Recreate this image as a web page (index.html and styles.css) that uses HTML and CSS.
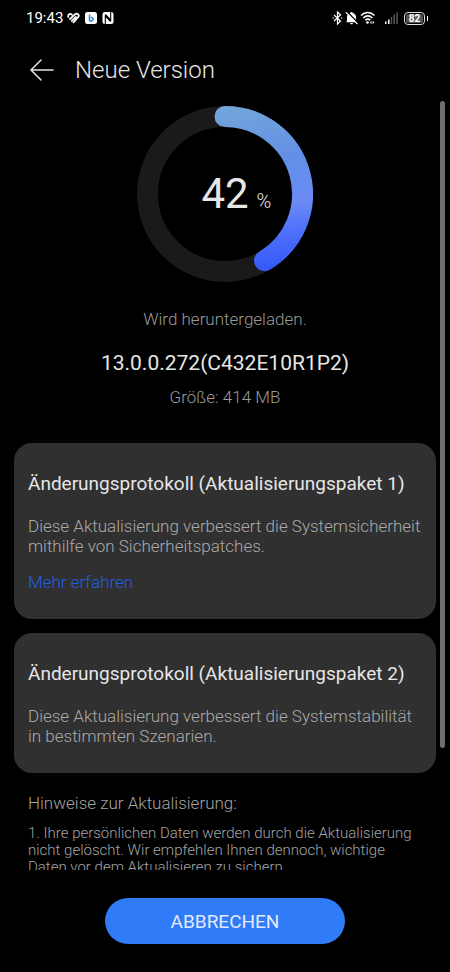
FILE: index.html
```html
<!DOCTYPE html>
<html lang="de">
<head>
<meta charset="utf-8">
<meta name="viewport" content="width=device-width, initial-scale=1">
<title>Neue Version</title>
<link rel="stylesheet" href="styles.css">
</head>
<body>
<div class="status">
  <div class="status-group">
    <span class="clock">19:43</span>
    <svg width="13" height="12" viewBox="0 0 13 12" fill="none" stroke="#fff" stroke-width="1.800" stroke-linecap="round" stroke-linejoin="round"><path d="M1.200 4.800C.8 2.500 3 1.200 4.800 2.600M3 7 8.200 2.200C10 .8 12.200 2.200 11.700 4.300L6.500 10.300M4.800 8.800 8.800 5"/></svg>
    <svg class="badge-icon" width="12" height="12" viewBox="0 0 12 12"><rect width="12" height="12" rx="2.500" fill="#fff"/><path d="M4.500 2.500v6l1.500.8 2-1.300c.8-1.500-.3-2.500-2.300-2.500" fill="none" stroke="#2f86dc" stroke-width="1.500"/></svg>
    <svg width="12" height="12" viewBox="0 0 12 12"><rect x=".5" width="11" height="12" rx="2.500" fill="#fff"/><path d="M3.300 12V4L8.700 9.500M8.700 0V8L3.300 2.500" fill="none" stroke="#000" stroke-width="1.100"/></svg>
  </div>
  <div class="status-group status-right">
    <svg width="11" height="14" viewBox="0 0 11 14" fill="none" stroke="#fff" stroke-width="1.200"><path d="m2 4 6.500 6L5.500 13V1l3 3L2 10"/><path d="M.5 7h1.500M9 7h1.500"/></svg>
    <svg width="13" height="14" viewBox="0 0 13 14"><path d="M2 10V6a4.500 4.500 0 0 1 3.300-4c0-1.500 2.400-1.500 2.400 0A4.500 4.500 0 0 1 11 6v4l1 1.200H1zM5 12h3c-.3 1.700-2.700 1.700-3 0z" fill="#fff"/><path d="m2 .5 11 11.500" stroke="#000" stroke-width="1.300"/><path d="m.8 1.200 11.700 12" stroke="#fff" stroke-width="1.200"/></svg>
    <svg width="16" height="14" viewBox="0 0 16 14" fill="none" stroke="#fff" stroke-width="1.600"><path d="M1 4.500c4-4 9.500-4 13.500 0M3.200 7c3-2.700 6.300-2.700 9.200 0M5.300 9.200c1.700-1.300 3.500-1.300 5 0"/><circle cx="7.500" cy="11.500" r="1.300" fill="#fff" stroke="none"/><path d="m11.500 9.700-1.600 1.800 1.600 1.800zM12.700 9.700l1.600 1.800-1.600 1.800z" fill="#fff" stroke="none"/></svg>
    <svg class="signal" width="13" height="12" viewBox="0 0 13 12"><path d="M0 9.500h1.500V12H0zM3 7.500h1.500V12H3z" fill="#fff"/><path d="M5.700 5h1.500v7H5.700zM8.500 2.500H10V12H8.500zM11.300.5h1.500V12h-1.500z" fill="#555"/></svg>
    <div class="battery"><span>82</span></div>
  </div>
</div>
<header class="header">
  <button class="back" type="button" aria-label="Zurück"><svg width="24" height="22" viewBox="0 0 24 22" fill="none" stroke="#e4e4e4" stroke-width="1.500" stroke-linecap="round" stroke-linejoin="round"><path d="M11 1 1 11l10 10M1 11h22"/></svg></button>
  <h1>Neue Version</h1>
</header>
<main class="content">
  <section class="progress">
    <div class="ring">
      <svg viewBox="0 0 176 176" aria-hidden="true">
        <defs><linearGradient id="arc" gradientUnits="userSpaceOnUse" x1="80" y1="0" x2="100" y2="166"><stop offset="0" stop-color="#73a7d9"/><stop offset=".35" stop-color="#628fe6"/><stop offset=".62" stop-color="#6b8bf5"/><stop offset=".8" stop-color="#4f70fa"/><stop offset="1" stop-color="#3459fb"/></linearGradient></defs>
        <circle cx="88" cy="88" r="77.500" fill="none" stroke="#1a1a1a" stroke-width="21"/>
        <path d="M88 10.500A77.500 77.500 0 0 1 127.500 154.700" fill="none" stroke="url(#arc)" stroke-width="21" stroke-linecap="round"/>
      </svg>
      <div class="percent"><span class="value">42</span><span class="unit">%</span></div>
    </div>
    <p class="state">Wird heruntergeladen.</p>
    <h2 class="version">13.0.0.272(C432E10R1P2)</h2>
    <p class="size">Größe: 414 MB</p>
  </section>
  <section class="card">
    <h3>Änderungsprotokoll (Aktualisierungspaket 1)</h3>
    <p>Diese Aktualisierung verbessert die Systemsicherheit mithilfe von Sicherheitspatches.</p>
    <a href="#mehr">Mehr erfahren</a>
  </section>
  <section class="card">
    <h3>Änderungsprotokoll (Aktualisierungspaket 2)</h3>
    <p>Diese Aktualisierung verbessert die Systemstabilität in bestimmten Szenarien.</p>
  </section>
  <section class="notes">
    <h4>Hinweise zur Aktualisierung:</h4>
    <p>1. Ihre persönlichen Daten werden durch die Aktualisierung nicht gelöscht. Wir empfehlen Ihnen dennoch, wichtige Daten vor dem Aktualisieren zu sichern.</p>
  </section>
  <div class="thumb"></div>
</main>
<footer class="footer"><button class="cancel" type="button">ABBRECHEN</button></footer>
</body>
</html>
```
FILE: styles.css
```css
* { box-sizing: border-box; margin: 0; padding: 0; }
body {
  display: flex;
  flex-direction: column;
  height: 100vh;
  overflow: hidden;
  background: #000;
  color: #e6e6e6;
  font-family: Roboto, "Liberation Sans", sans-serif;
  font-size: 17px;
  font-weight: 300;
  line-height: 20px;
}
h1, h2, h3, h4 { font-weight: 400; }
svg { display: block; flex: none; }
button { border: 0; font-family: inherit; cursor: pointer; }

.status {
  display: flex;
  justify-content: space-between;
  padding: 8px 25px 0 26px;
  height: 40px;
  color: #fff;
}
.status-group { display: flex; align-items: center; gap: 4px; height: 20px; }
.status-right { gap: 2px; }
.clock { font-size: 15px; font-weight: 400; }
.badge-icon { margin: 0 1px; }
.signal { margin: 0 4px 0 7px; }
.battery {
  position: relative;
  width: 21px;
  height: 13px;
  padding: 1px;
  border: 1px solid #ddd;
  border-radius: 4px;
}
.battery span {
  display: block;
  border-radius: 2px;
  background: #555;
  font-size: 10px;
  font-weight: 700;
  line-height: 9px;
  text-align: center;
}
.battery::after {
  content: "";
  position: absolute;
  top: 3px;
  right: -4px;
  width: 1px;
  height: 5px;
  background: #fff;
}

.header { display: flex; align-items: center; gap: 21px; height: 60px; padding-left: 30px; }
.back { background: none; }
.header h1 { font-size: 24px; font-weight: 300; line-height: 32px; }

.content {
  position: relative;
  flex: 1;
  min-height: 0;
  overflow: hidden;
  padding: 6px 14px 0;
}
.progress { margin-bottom: 36px; text-align: center; }
.ring { position: relative; width: 176px; margin: 0 auto 27px; }
.percent {
  position: absolute;
  inset: 0;
  display: grid;
  grid-template-columns: 1fr auto 1fr;
  align-content: center;
  align-items: baseline;
}
.value { grid-column: 2; font-size: 42px; font-weight: 400; line-height: 48px; }
.unit { font-size: 20px; text-align: left; padding-left: 8px; }
.state, .size { color: #9a9a9a; }
.version { margin: 20px 0 10px; font-size: 21px; line-height: 28px; }

.card { margin-bottom: 14px; padding: 28px 14px 27px; border-radius: 18px; background: #303030; }
.card h3 { margin-bottom: 19px; font-size: 19px; line-height: 26px; }
.card p { color: #aaa; }
.card a { display: block; margin-top: 16px; color: #1f5fe6; text-decoration: none; }

.notes { padding: 6px 14px 0; color: #a4a4a4; }
.notes h4 { margin-bottom: 12px; font-size: 17px; font-weight: 300; }
.notes p { font-size: 15px; line-height: 17px; }

.thumb {
  position: absolute;
  top: 1px;
  right: 5px;
  width: 5px;
  height: 84%;
  border-radius: 3px;
  background: #6e6e6e;
}

.footer { display: flex; justify-content: center; align-items: flex-start; height: 102px; padding-top: 28px; }
.cancel {
  width: 240px;
  height: 46px;
  border-radius: 23px;
  background: #307bf8;
  color: #e1ebfd;
  font-size: 19px;
}
```
